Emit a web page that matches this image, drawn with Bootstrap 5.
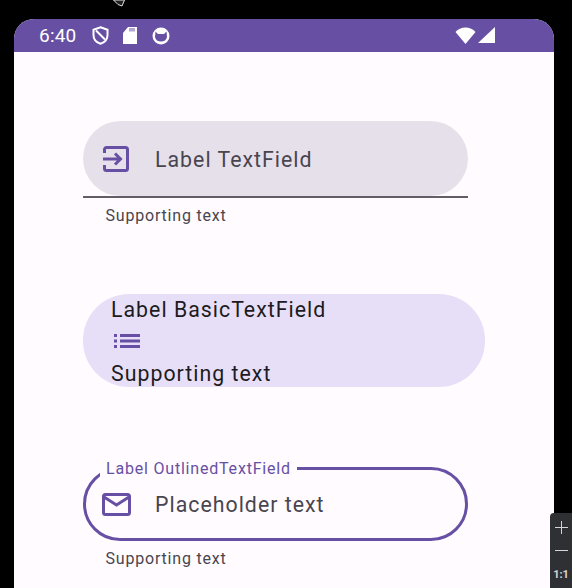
<!DOCTYPE html>
<html>
<head>
    <meta charset="UTF-8">
    <meta name="viewport" content="width=device-width, initial-scale=1">
    <title>Text fields</title>
    <link href="https://cdn.jsdelivr.net/npm/bootstrap@5.3.3/dist/css/bootstrap.min.css" rel="stylesheet">
    <style>
        html, body { height: 100%; }
        body {
            background: #000;
            font-family: Roboto, "Liberation Sans", sans-serif;
            overflow: hidden;
            position: relative;
        }
        .pointer-mark { position: absolute; left: 113px; top: 0; }
        .phone-screen {
            width: 540px;
            height: 569px;
            margin: 19px 0 0 14px;
            background: #fffbfe;
            border-radius: 20px 20px 0 0;
            overflow: hidden;
        }
        .status-row {
            height: 33px;
            background: #6750a4;
            color: #fff;
            font-size: 19px;
            padding: 0 59px 0 25px;
        }
        .status-time { width: 53px; padding-top: 2px; letter-spacing: .2px; }
        .shield-icon { margin-right: 14px; }
        .card-icon { margin-right: 15px; }
        .wifi-icon { margin-right: 2px; }
        .field-stack { padding: 69px 0 0 69px; }
        .filled-pill {
            width: 385px;
            height: 75px;
            border-radius: 38px;
            background: #e6e0eb;
            padding-left: 20px;
            color: #49454f;
            font-size: 21.3px;
            letter-spacing: 1.02px;
        }
        .field-text { padding-top: 2px; }
        .filled-rule { width: 385px; height: 2px; background: #625e68; }
        .help-text {
            color: #49454f;
            font-size: 16px;
            letter-spacing: .8px;
            line-height: 19px;
            padding-left: 22.5px;
        }
        .filled-help { margin-top: 8px; }
        .basic-pill {
            width: 402px;
            height: 93px;
            margin-top: 69px;
            border-radius: 46px;
            background: #e7dff8;
            color: #1d1b20;
            padding-left: 28px;
            font-size: 21.3px;
            letter-spacing: 1.02px;
            line-height: 32px;
        }
        .basic-icon { height: 32px; padding: 0 0 2px 3px; }
        .outline-pill {
            width: 385px;
            height: 74px;
            margin-top: 80px;
            border: 3px solid #6750a4;
            border-radius: 37px;
            padding-left: 16px;
            color: #49454f;
            font-size: 21.3px;
            letter-spacing: 1.02px;
            position: relative;
        }
        .outline-label {
            position: absolute;
            left: 14px;
            top: -10px;
            background: #fffbfe;
            color: #6750a4;
            font-size: 16px;
            letter-spacing: .8px;
            line-height: 18px;
            padding: 0 6px;
        }
        .enter-gap { margin-right: 26px; }
        .mail-gap { margin-right: 24px; }
        .outline-help { margin-top: 8px; }
        .zoom-rail {
            position: absolute;
            right: 0;
            top: 513px;
            width: 22px;
            height: 75px;
            background: #2f3033;
            border-top-left-radius: 4px;
            color: #d5d5d5;
            font-size: 11px;
            font-weight: 700;
        }
    </style>
</head>
<body>
    <svg class="pointer-mark" width="13" height="7" viewBox="0 0 13 7">
        <path d="M0.5 0 L5 4.5 L9 6 L11.5 0 Z" fill="#222" stroke="#ddd" stroke-width="1"/>
    </svg>

    <div class="phone-screen">
        <div class="status-row d-flex align-items-center">
            <span class="status-time">6:40</span>
            <svg class="shield-icon" width="17" height="19" viewBox="0 0 17 19">
                <path d="M8.5 1.2 L15.5 3.8 V9 C15.5 13.5 12.5 16.5 8.5 17.8 C4.5 16.5 1.5 13.5 1.5 9 V3.8 Z" fill="none" stroke="#fff" stroke-width="2"/>
                <path d="M4 4.5 L13 13.5" stroke="#fff" stroke-width="2"/>
            </svg>
            <svg class="card-icon" width="14" height="17" viewBox="0 0 14 17">
                <path d="M5 0 H14 V17 H0 V6 Z" fill="#fff"/>
                <path d="M7 1v3.5M9 1v3.5M11 1v3.5" stroke="#6750a4" stroke-width="1"/>
            </svg>
            <svg width="18" height="18" viewBox="0 0 18 18">
                <circle cx="9" cy="9" r="8.5" fill="#fff"/>
                <path d="M3.5 4.5 L6 7 H12 L14.5 4.5 L15 10 C14.5 13 12 14.5 9 14.5 C6 14.5 3.5 13 3 10 Z" fill="#6750a4"/>
            </svg>
            <span class="ms-auto d-flex align-items-end">
                <svg class="wifi-icon" width="21" height="17" viewBox="0 0 21 17">
                    <path d="M10.5 17 L0.5 5 C3 2 6.5 0.5 10.5 0.5 C14.5 0.5 18 2 20.5 5 Z" fill="#fff"/>
                </svg>
                <svg width="17" height="17" viewBox="0 0 17 17">
                    <path d="M17 0 V16 H0 Z" fill="#fff"/>
                </svg>
            </span>
        </div>

        <div class="field-stack">
            <div class="filled-pill d-flex align-items-center">
                <svg class="enter-gap" width="26" height="26" viewBox="0 0 26 26" fill="none" stroke="#6750a4" stroke-width="3">
                    <path d="M1.5 7 V3.5 A2 2 0 0 1 3.5 1.5 H22.5 A2 2 0 0 1 24.5 3.5 V22.5 A2 2 0 0 1 22.5 24.5 H3.5 A2 2 0 0 1 1.5 22.5 V19"/>
                    <path d="M0 13 H17.5 M12 7.5 L17.5 13 L12 18.5"/>
                </svg>
                <span class="field-text">Label TextField</span>
            </div>
            <div class="filled-rule"></div>
            <div class="help-text filled-help">Supporting text</div>

            <div class="basic-pill">
                <div>Label BasicTextField</div>
                <div class="basic-icon d-flex align-items-center">
                    <svg width="26" height="14" viewBox="0 0 26 14" fill="#6750a4">
                        <rect x="0" y="0" width="3" height="3"/>
                        <rect x="0" y="5.5" width="3" height="3"/>
                        <rect x="0" y="11" width="3" height="3"/>
                        <rect x="6" y="0" width="20" height="3"/>
                        <rect x="6" y="5.5" width="20" height="3"/>
                        <rect x="6" y="11" width="20" height="3"/>
                    </svg>
                </div>
                <div>Supporting text</div>
            </div>

            <div class="outline-pill d-flex align-items-center">
                <span class="outline-label">Label OutlinedTextField</span>
                <svg class="mail-gap" width="29" height="23" viewBox="0 0 29 23" fill="none" stroke="#6750a4" stroke-width="3">
                    <rect x="1.5" y="1.5" width="26" height="20" rx="2"/>
                    <path d="M2 4 L14.5 12 L27 4"/>
                </svg>
                <span class="field-text">Placeholder text</span>
            </div>
            <div class="help-text outline-help">Supporting text</div>
        </div>
    </div>

    <div class="zoom-rail d-flex flex-column align-items-center">
        <svg class="mt-2" width="13" height="13" viewBox="0 0 13 13" stroke="#d5d5d5" stroke-width="1"><path d="M6.5 0v13M0 6.5h13"/></svg>
        <svg class="mt-3" width="13" height="1" viewBox="0 0 13 1" stroke="#d5d5d5" stroke-width="1"><path d="M0 .5h13"/></svg>
        <span class="mt-3">1:1</span>
    </div>

    <script src="https://cdn.jsdelivr.net/npm/bootstrap@5.3.3/dist/js/bootstrap.bundle.min.js"></script>
</body>
</html>
